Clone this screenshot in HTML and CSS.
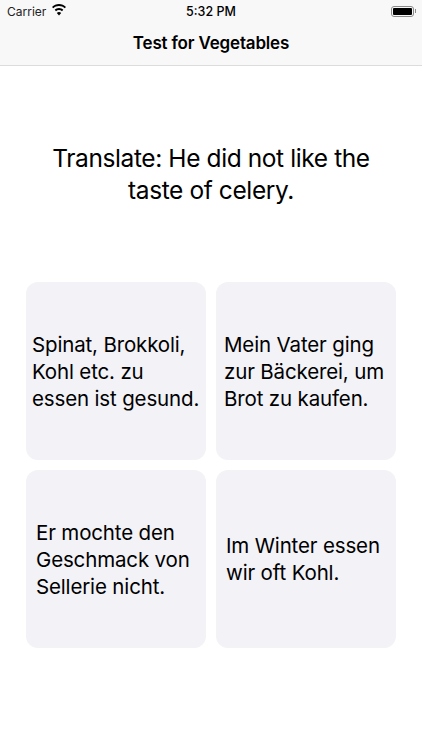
FILE: index.html
```html
<!DOCTYPE html>
<html lang="en">
<head>
    <meta charset="UTF-8">
    <meta name="viewport" content="width=device-width, initial-scale=1.0">
    <title>Test for Vegetables</title>
    <link rel="stylesheet" href="styles.css">
</head>
<body>

    <header class="topbar">
        <div class="status">
            <div class="status-left">
                <span>Carrier</span>
                <svg class="wifi" width="14" height="12" viewBox="0 0 14 12">
                    <path d="M7 0C4.300 0 1.900 1.100 0 2.900L1.300 4.300C2.800 2.800 4.800 2 7 2s4.200.800 5.700 2.300L14 2.900C12.100 1.100 9.700 0 7 0z" fill="#000"/>
                    <path d="M7 4C5.300 4 3.800 4.700 2.700 5.800L4 7.200C4.800 6.400 5.800 6 7 6s2.200.400 3 1.200l1.300-1.400C10.200 4.700 8.700 4 7 4z" fill="#000"/>
                    <path d="M7 8c-.900 0-1.600.300-2.200.900L7 11.500l2.200-2.600C8.600 8.300 7.900 8 7 8z" fill="#000"/>
                </svg>
            </div>
            <div class="status-time">5:32 PM</div>
            <div class="status-right">
                <div class="battery"><div class="battery-fill"></div></div>
                <div class="battery-cap"></div>
            </div>
        </div>
        <div class="nav-title">Test for Vegetables</div>
    </header>

    <h1 class="question">Translate: He did not like the taste of celery.</h1>

    <div class="answers">
        <div class="answer answer-a"><p>Spinat, Brokkoli,<br>Kohl etc. zu<br>essen ist gesund.</p></div>
        <div class="answer answer-b"><p>Mein Vater ging<br>zur Bäckerei, um<br>Brot zu kaufen.</p></div>
        <div class="answer answer-c"><p>Er mochte den<br>Geschmack von<br>Sellerie nicht.</p></div>
        <div class="answer answer-d"><p>Im Winter essen<br>wir oft Kohl.</p></div>
    </div>

</body>
</html>
```

FILE: styles.css
```css
body {
    font-family: Inter, "Liberation Sans", sans-serif;
    background-color: #fff;
    color: #000;
    margin: 0;
    padding: 0;
}

.topbar {
    background-color: #f8f8f8;
    border-bottom: 1px solid #dcdcdc;
    height: 65px;
}

.status {
    display: flex;
    justify-content: space-between;
    align-items: center;
    height: 22px;
    padding: 0 6px 0 7px;
    font-size: 12.5px;
    font-weight: 500;
}

.status-left {
    display: flex;
    align-items: center;
    gap: 6px;
    width: 99px;
    color: #222;
    font-size: 12px;
    font-weight: 400;
}

.wifi {
    margin-bottom: 2px;
}

.status-right {
    display: flex;
    align-items: center;
    justify-content: flex-end;
    gap: 1px;
    width: 100px;
}

.battery {
    width: 23px;
    height: 11px;
    box-sizing: border-box;
    border: 1px solid #8a8a8a;
    border-radius: 3px;
    padding: 1px;
}

.battery-fill {
    height: 100%;
    background-color: #000;
    border-radius: 1px;
}

.battery-cap {
    width: 1px;
    height: 4px;
    background-color: #8a8a8a;
}

.nav-title {
    text-align: center;
    font-size: 17px;
    font-weight: 600;
    letter-spacing: -0.01em;
    line-height: 20px;
    margin-top: 11px;
}

.question {
    font-size: 24.500px;
    font-weight: 400;
    letter-spacing: -0.4px;
    line-height: 32px;
    text-align: center;
    margin: 0;
    padding: 76px 40px 0;
}

.answers {
    display: grid;
    grid-template-columns: 180px 180px;
    grid-auto-rows: 178px;
    gap: 10px;
    justify-content: center;
    margin-top: 76px;
}

.answer {
    background-color: #f2f2f7;
    border-radius: 12px;
    display: flex;
    align-items: center;
    font-size: 20.5px;
    letter-spacing: -0.15px;
    line-height: 27px;
}

.answer p {
    margin: 0;
}

.answer-a { padding-left: 6px; }
.answer-b { padding-left: 8px; }
.answer-c { padding-left: 10px; }
.answer-d { padding-left: 10px; }
```
